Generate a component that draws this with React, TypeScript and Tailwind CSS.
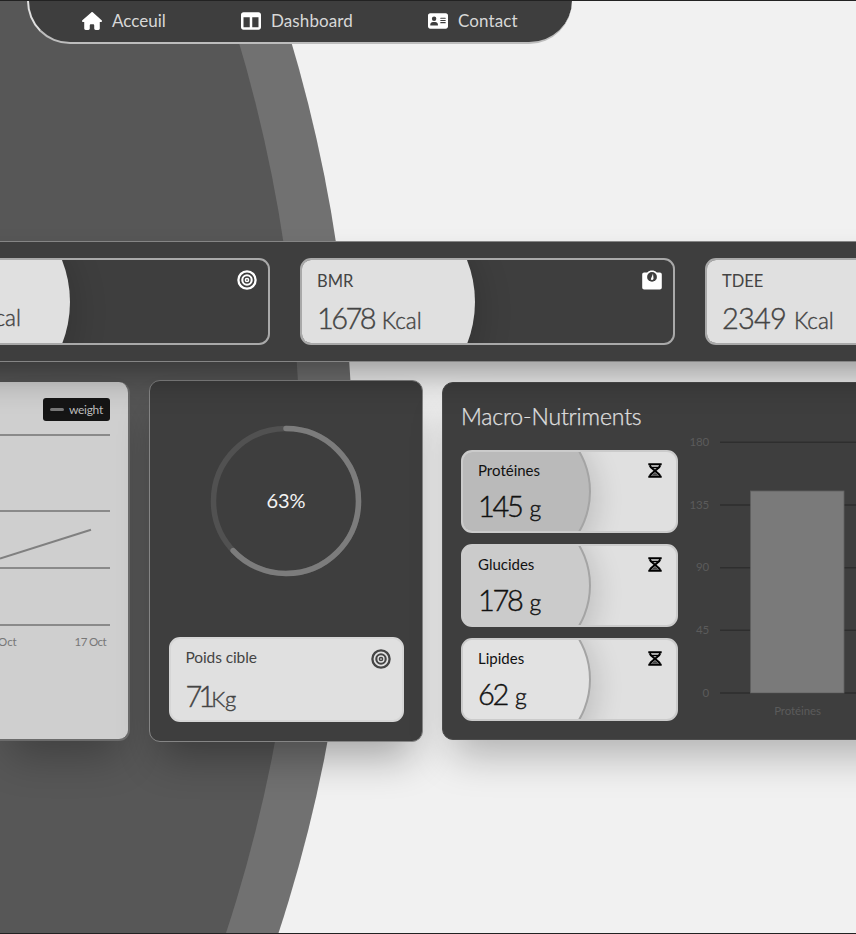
import type { ReactNode } from "react";
import { FaHouse, FaTableColumns, FaAddressCard } from "react-icons/fa6";

function Target({ className }: { className: string }) {
  return (
    <svg viewBox="0 0 20 20" className={className} fill="none" stroke="currentColor">
      <circle cx="10" cy="10" r="8.6" strokeWidth="2.3" />
      <circle cx="10" cy="10" r="4.7" strokeWidth="2.1" />
      <circle cx="10" cy="10" r="1.6" strokeWidth="1.5" />
    </svg>
  );
}

function Scale({ className }: { className: string }) {
  return (
    <svg viewBox="0 0 20 20" className={className}>
      <path
        fill="currentColor"
        d="M2.2 2.4H5.2C6.6 1 8.2.4 10 .4s3.4.6 4.800 2h3c1.200 0 2 .8 2 2v13.200c0 1.200-.8 2-2 2H2.200c-1.200 0-2-.8-2-2V4.400c0-1.200.8-2 2-2z"
      />
      <circle cx="10" cy="6.900" r="4.900" fill="#3e3e3e" />
      <path d="M8.800 9.200 11 3.600 11.500 8.500c-.2 1.600-2.200 2-2.700.7z" fill="currentColor" />
    </svg>
  );
}

function Hourglass() {
  return (
    <svg viewBox="0 0 14 15" className="h-[15px] w-[14px] text-black" fill="none" stroke="currentColor">
      <path d="M.3 1.300H13.700M.3 13.700H13.700" strokeWidth="2" />
      <path d="M1.800 2.200 2.800 4.200 11.200 11.400 12.200 13M12.200 2.200 11.200 4.200 2.800 11.400 1.800 13" strokeWidth="2.100" />
      <path d="M2.800 4.500H11.200" strokeWidth="1.400" />
      <path d="M3 12.800 7 9.700 11 12.800z" fill="#444" stroke="none" />
    </svg>
  );
}

function NavItem({ icon, children }: { icon: ReactNode; children: ReactNode }) {
  return (
    <a className="flex items-center gap-[10px] text-[17px] leading-5">
      {icon}
      <span className="text-[#d8d8d8]">{children}</span>
    </a>
  );
}

function StatCard({ children, icon }: { children: ReactNode; icon: ReactNode }) {
  return (
    <div className="relative h-[87px] w-[375px] shrink-0 overflow-hidden rounded-[11px] border-2 border-[#a9a9a9] bg-[#3e3e3e]">
      <div className="absolute -left-[55px] -top-[72px] size-[228px] rounded-full bg-[#e0e0e0] shadow-[10px_10px_30px_rgba(0,0,0,0.12)]" />
      <div className="relative flex justify-between pl-[15px] pr-[11px] pt-[10px]">
        <div className="text-[#444]">{children}</div>
        <div className="text-white">{icon}</div>
      </div>
    </div>
  );
}

function Amount({ label, children }: { label: string; children: ReactNode }) {
  return (
    <>
      <p className="text-[16.500px] leading-[22px]">{label}</p>
      <p className="mt-[9px] whitespace-nowrap text-[29px] font-light leading-[34px] [-webkit-text-stroke:0.400px]">
        {children} <span className="text-[22.500px]">Kcal</span>
      </p>
    </>
  );
}

function MacroCard({ label, value, disc }: { label: string; value: string; disc: string }) {
  return (
    <div className="relative h-[83px] w-[217px] overflow-hidden rounded-[11px] border-2 border-[#cbcbcb] bg-[#e0e0e0]">
      <div className={`absolute -left-[33px] -top-[41px] size-[161px] rounded-full border-2 border-[#a4a4a4] shadow-[8px_8px_26px_rgba(0,0,0,0.13)] ${disc}`} />
      <div className="relative flex justify-between pl-[15px] pr-[14px] pt-[9px]">
        <div className="text-[#111]">
          <p className="text-[15px] leading-[19px]">{label}</p>
          <p className="mt-[9px] flex items-baseline gap-[8px] text-[29px] font-light leading-[34px] [-webkit-text-stroke:0.400px]">
            <span className="tracking-[-2.300px]">{value}</span>
            <span className="text-[23px]">g</span>
          </p>
        </div>
        <div className="pt-[2px]">
          <Hourglass />
        </div>
      </div>
    </div>
  );
}

const ticks = ["180", "135", "90", "45", "0"];

export default function App() {
  return (
    <div className="relative flex h-[934px] w-[856px] flex-col overflow-hidden border-y border-[#222] bg-[#f1f1f1] font-[Lato,sans-serif]">
      <svg className="absolute inset-0 h-[932px] w-[856px]" viewBox="0 1 856 932">
        <circle cx="-1142" cy="467" r="1495" fill="#717171" />
        <circle cx="-1194.500" cy="467" r="1495" fill="#575757" />
      </svg>

      <nav className="relative ml-[27px] flex h-[43px] w-[545px] shrink-0 items-center rounded-b-[43px] border-b-2 border-l-2 border-b-[#bdbdbd] border-l-[#e0e0e0] bg-[#3e3e3e] pb-px pl-[53px] text-white">
        <div className="w-[159px]">
          <NavItem icon={<FaHouse className="h-[18px] w-5" />}>Acceuil</NavItem>
        </div>
        <div className="w-[187px]">
          <NavItem icon={<FaTableColumns className="size-5" />}>
            <span className="tracking-[0.100px]">Dashboard</span>
          </NavItem>
        </div>
        <NavItem icon={<FaAddressCard className="h-[18px] w-5" />}>
          <span className="tracking-[0.100px]">Contact</span>
        </NavItem>
      </nav>

      <section className="relative z-10 -mx-[60px] mt-[197px] flex h-[121px] shrink-0 gap-[30px] border-y border-[#858585] bg-[#3e3e3e] pl-[60px] pt-4 shadow-[0_20px_36px_-8px_rgba(0,0,0,0.38)]">
        <div className="-ml-[105px] shrink-0">
          <StatCard icon={<Target className="size-5" />}>
            <p className="ml-[69px] mt-[31px] text-[22.500px] font-light leading-[34px] [-webkit-text-stroke:0.400px]">Kcal</p>
          </StatCard>
        </div>
        <StatCard icon={<Scale className="size-5" />}>
          <Amount label="BMR"><span className="tracking-[-2.600px]">1678</span></Amount>
        </StatCard>
        <StatCard icon={<Scale className="size-5" />}>
          <Amount label="TDEE"><span className="tracking-[-0.800px]">2349</span></Amount>
        </StatCard>
      </section>

      <main className="relative mt-[18px] flex items-start">
        <section className="mt-[2px] h-[359px] w-[130px] shrink-0 rounded-r-[11px] border-b-2 border-r-2 border-[#6c6c6c] bg-[#cfcfcf] pt-[16px] shadow-[0_25px_40px_-10px_rgba(0,0,0,0.27)]">
          <div className="ml-[43px] flex h-[23px] w-[67px] items-center gap-[5px] rounded-[3px] bg-[#151515] pl-[7px] text-[#bdbdbd]">
            <span className="h-[3px] w-[14px] rounded bg-[#777]" />
            <span className="text-[12px] tracking-[-0.300px]">weight</span>
          </div>
          <svg className="mt-[12px] h-[194px] w-[110px]" viewBox="0 433 110 194" fill="none" stroke="#747474" strokeWidth="1.500">
            <path d="M0 435H110M0 511H110M0 568H110M0 625H110" />
            <path d="M0 558.500 91 529.700" strokeWidth="2" stroke="#808080" />
          </svg>
          <div className="mt-[7px] flex w-[106px] justify-between whitespace-nowrap text-[11.500px] leading-4 text-[#777]">
            <span className="-ml-[2px]">Oct</span>
            <span className="tracking-[-0.600px]">17 Oct</span>
          </div>
        </section>

        <section className="ml-[19px] flex h-[362px] w-[274px] shrink-0 flex-col items-center rounded-[11px] border border-[#858585] bg-[#3e3e3e] pt-[43px] shadow-[0_25px_40px_-10px_rgba(0,0,0,0.32)]">
          <div className="grid size-[154px] place-items-center">
            <svg viewBox="0 0 154 154" className="col-start-1 row-start-1 size-[154px]" fill="none" strokeWidth="5.500" strokeLinecap="round">
              <circle cx="77" cy="77" r="72.500" stroke="#515151" />
              <circle cx="77" cy="77" r="72.500" stroke="#7c7c7c" pathLength="100" strokeDasharray="63 100" transform="rotate(-90 77 77)" />
            </svg>
            <span className="col-start-1 row-start-1 pb-[2px] text-[20px] text-[#f2f2f2]">63%</span>
          </div>
          <div className="mt-[59px] flex h-[85px] w-[235px] justify-between rounded-[11px] border-2 border-[#d6d6d6] bg-[#e0e0e0] pl-[15px] pr-[11px] pt-[8px] text-[#444]">
            <div>
              <p className="text-[15.500px] leading-5 tracking-[-0.100px]">Poids cible</p>
              <p className="mt-[12px] text-[29px] font-light leading-[34px] [-webkit-text-stroke:0.400px]">
                <span className="tracking-[-4px]">71</span>
                <span className="text-[22px]">Kg</span>
              </p>
            </div>
            <Target className="mt-[2px] size-5" />
          </div>
        </section>

        <section className="ml-[19px] mt-[2px] h-[358px] w-[520px] shrink-0 rounded-[11px] border border-[#4c4c4c] bg-[#3e3e3e] pl-[18px] pt-[18px] shadow-[0_25px_40px_-10px_rgba(0,0,0,0.27)]">
          <div className="flex">
            <div className="flex w-[217px] shrink-0 flex-col gap-[11px]">
              <h2 className="mb-[8px] h-[30px] whitespace-nowrap text-[23px] font-light leading-[30px] tracking-[-0.150px] text-[#e0e0e0] [-webkit-text-stroke:0.250px]">Macro-Nutriments</h2>
              <MacroCard label="Protéines" value="145" disc="bg-[#bababa]" />
              <MacroCard label="Glucides" value="178" disc="bg-[#cbcbcb]" />
              <MacroCard label="Lipides" value="62" disc="bg-[#e2e2e2]" />
            </div>
            <div className="mt-[32px] flex w-[31px] flex-col self-start text-right text-[11.500px] leading-[18px] tracking-[-0.200px] text-[#5b5b5b]">
              {ticks.map((tick) => (
                <span key={tick} className="h-[62.700px]">{tick}</span>
              ))}
            </div>
            <div className="ml-[11px] mt-[39px]">
              <svg className="h-[256px] w-[140px]" viewBox="720 440 140 256">
                <path d="M720 442.300H860M720 505H860M720 567.700H860M720 630.300H860M720 693H860" stroke="#2e2e2e" strokeWidth="1.500" />
                <rect x="750.500" y="491" width="93.500" height="202" fill="#7a7a7a" stroke="#606060" strokeWidth="0.800" />
              </svg>
              <p className="mt-[6px] w-[155px] text-center text-[11.500px] leading-[18px] tracking-[-0.100px] text-[#5b5b5b]">Protéines</p>
            </div>
          </div>
        </section>
      </main>
    </div>
  );
}
